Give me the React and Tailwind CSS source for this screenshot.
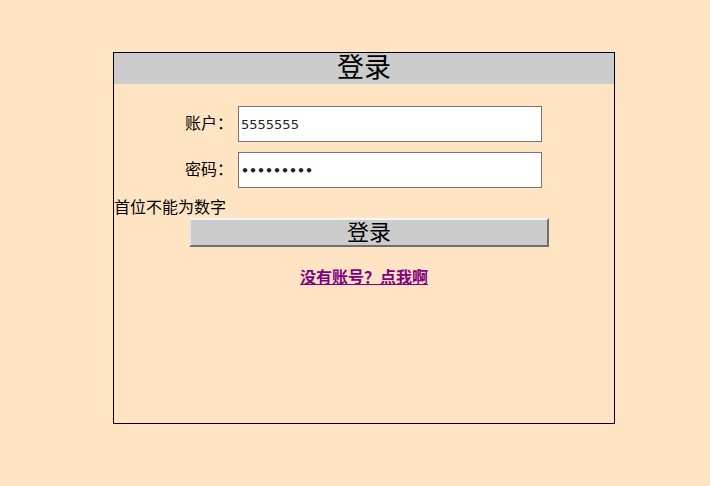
export default function App() {
  return (
    <div className="min-h-[486px] w-full bg-[#ffe4c4] pt-[52px] font-['Liberation_Serif','Noto_Sans_CJK_SC',serif] text-black">
      <div className="ml-[113px] h-[372px] w-[502px] border border-black">
        {/* Header */}
        <div className="flex h-[31px] items-center justify-center bg-[#cccccc]">
          <h1 className="text-[27px] leading-none">登录</h1>
        </div>

        <div className="mt-[22px] flex flex-col gap-[10px]">
          <div className="flex items-center">
            <label className="w-[119px] text-right text-[16px]">账户：</label>
            <input
              readOnly
              value="5555555"
              className="ml-[5px] h-[36px] w-[304px] border border-[#767676] bg-white px-[2px] font-['DejaVu_Sans',sans-serif] text-[13px] text-[#222] outline-none"
            />
          </div>
          <div className="flex items-center">
            <label className="w-[119px] text-right text-[16px]">密码：</label>
            <input
              readOnly
              type="password"
              value="123456789"
              className="ml-[5px] h-[36px] w-[304px] border border-[#767676] bg-white px-[2px] font-['DejaVu_Sans',sans-serif] text-[12.5px] font-bold text-[#222] outline-none"
            />
          </div>
        </div>

        <p className="mt-[11px] h-[18px] text-[16px] leading-[18px]">首位不能为数字</p>

        <button className="ml-[75px] mt-[1px] flex h-[29px] w-[360px] items-center justify-center border-2 border-t-[#f4f4f4] border-l-[#e6e6e6] border-r-[#6e6e6e] border-b-[#6e6e6e] bg-[#cccccc] text-[22px] leading-none">
          登录
        </button>

        <div className="mt-[19px] flex justify-center">
          <a href="#" className="text-[16px] font-bold text-[#800080] underline">
            没有账号？点我啊
          </a>
        </div>
      </div>
    </div>
  )
}
